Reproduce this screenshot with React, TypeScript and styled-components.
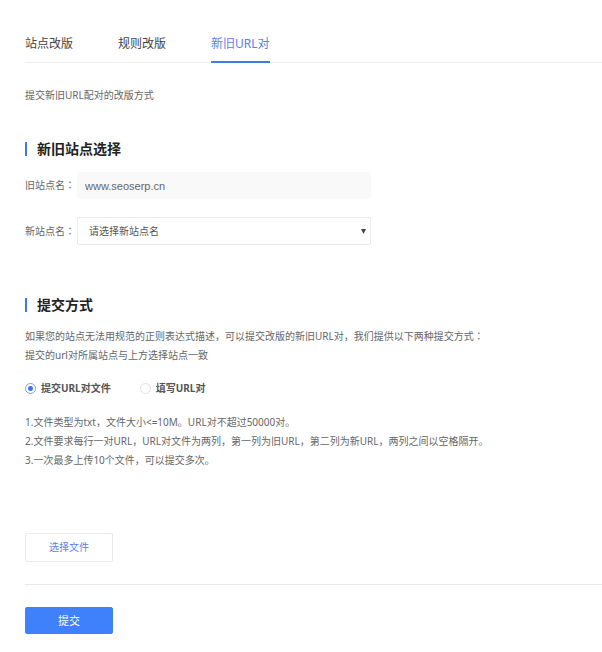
import React, { useState } from "react";
import styled, { createGlobalStyle } from "styled-components";

const Global = createGlobalStyle`
  * { box-sizing: border-box; }
  body { margin: 0; background: #fff; color: #666; font: 10px/19px "Noto Sans", "Liberation Sans", "Noto Sans CJK SC", sans-serif; }
  button, input, select { font: inherit; color: inherit; }
`;
const Page = styled.main`padding: 27px 0 18px 25px;`;
const Tabs = styled.nav`display: flex; gap: 45px; border-bottom: 1px solid #f0f0f0;`;
const Tab = styled.a<{ $on?: boolean }>`
  font-size: 12px; line-height: 34px; height: 36px; margin-bottom: -1px; text-decoration: none;
  color: ${(p) => (p.$on ? "#5b7fea" : "#444")};
  border-bottom: 2px solid ${(p) => (p.$on ? "#3f7be6" : "transparent")};
`;
const Intro = styled.p`margin: 23px 0 0;`;
const Heading = styled.h2<{ $gap: number }>`
  display: flex; align-items: center; gap: 10px; margin: ${(p) => p.$gap}px 0 0;
  font-size: 14px; line-height: 20px; font-weight: 700; color: #222;
  &::before { content: ""; width: 2px; height: 14px; background: #3f7be6; }
`;
const Field = styled.div<{ $gap: number }>`display: flex; align-items: center; margin-top: ${(p) => p.$gap}px;`;
const FieldLabel = styled.label`width: 52px; flex: none; white-space: nowrap;`;
const Colon = styled.span`font-family: "Noto Sans CJK JP", sans-serif; line-height: 1;`;
const Site = styled.input`
  width: 294px; height: 27px; padding: 0 8px; border: 0; border-radius: 2px; background: #f9f9f9;
  font-family: "Liberation Sans", sans-serif; font-size: 11px;
`;
const SelectBox = styled.div`
  width: 294px; height: 28px; display: flex; align-items: center; position: relative;
  svg { position: absolute; right: 5px; pointer-events: none; }
`;
const Select = styled.select`
  appearance: none; width: 100%; height: 28px; padding: 0 11px; border: 1px solid #e9e9e9; border-radius: 2px; background: #fff; color: #555;
`;
const Text = styled.p<{ $gap: number }>`margin: ${(p) => p.$gap}px 0 0;`;
const Rules = styled.ol`list-style: none; margin: 15px 0 0; padding: 0;`;
const Radios = styled.div`display: flex; gap: 29px; margin-top: 14px;`;
const RadioLabel = styled.label`display: flex; align-items: center; gap: 5px; font-weight: 700; color: #555;`;
const Radio = styled.input`
  appearance: none; width: 11px; height: 11px; margin: 0; border: 1px solid #e2e2e2; border-radius: 50%;
  &:checked { border-color: #7d9fe8; background: radial-gradient(circle, #3d72ea 2px, #fff 3px); }
`;
const Button = styled.button<{ $primary?: boolean }>`
  display: block; width: 88px; height: ${(p) => (p.$primary ? 27 : 29)}px; padding: 0; border-radius: 2px;
  border: 1px solid ${(p) => (p.$primary ? "#3f80fb" : "#e9e9e9")};
  background: ${(p) => (p.$primary ? "#3f80fb" : "#fff")};
  color: ${(p) => (p.$primary ? "#fff" : "#5b7fea")};
  font-size: ${(p) => (p.$primary ? 11 : 10)}px;
`;
const Upload = styled.div`padding: 63px 0 22px; border-bottom: 1px solid #e9e9e9; margin-bottom: 22px;`;

export default function App() {
  const [mode, setMode] = useState("file");
  return (
    <Page>
      <Global />
      <Tabs>
        <Tab href="#site">站点改版</Tab>
        <Tab href="#rule">规则改版</Tab>
        <Tab href="#url" $on>新旧URL对</Tab>
      </Tabs>
      <Intro>提交新旧URL配对的改版方式</Intro>
      <Heading $gap={34}>新旧站点选择</Heading>
      <Field $gap={13}>
        <FieldLabel htmlFor="old">旧站点名<Colon>：</Colon></FieldLabel>
        <Site id="old" readOnly value="www.seoserp.cn" />
      </Field>
      <Field $gap={18}>
        <FieldLabel htmlFor="new">新站点名<Colon>：</Colon></FieldLabel>
        <SelectBox>
          <Select id="new"><option>请选择新站点名</option></Select>
          <svg width="5" height="5" viewBox="0 0 5 5"><path d="M0 0h5L2.5 5z" fill="#444" /></svg>
        </SelectBox>
      </Field>
      <Heading $gap={50}>提交方式</Heading>
      <Text $gap={12}>如果您的站点无法用规范的正则表达式描述，可以提交改版的新旧URL对，我们提供以下两种提交方式<Colon>：</Colon></Text>
      <Text $gap={0}>提交的url对所属站点与上方选择站点一致</Text>
      <Radios>
        <RadioLabel><Radio type="radio" name="mode" checked={mode === "file"} onChange={() => setMode("file")} />提交URL对文件</RadioLabel>
        <RadioLabel><Radio type="radio" name="mode" checked={mode === "text"} onChange={() => setMode("text")} />填写URL对</RadioLabel>
      </Radios>
      <Rules>
        <li>1.文件类型为txt，文件大小&lt;=10M。URL对不超过50000对。</li>
        <li>2.文件要求每行一对URL，URL对文件为两列，第一列为旧URL，第二列为新URL，两列之间以空格隔开。</li>
        <li>3.一次最多上传10个文件，可以提交多次。</li>
      </Rules>
      <Upload><Button type="button">选择文件</Button></Upload>
      <Button type="submit" $primary>提交</Button>
    </Page>
  );
}
